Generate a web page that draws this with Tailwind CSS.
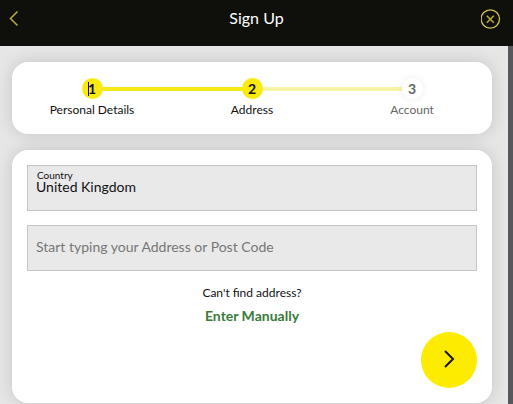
<!DOCTYPE html>
<html lang="en">
<head>
    <meta charset="UTF-8">
    <meta name="viewport" content="width=device-width, initial-scale=1.0">
    <title>Sign Up</title>
    <script src="https://cdn.jsdelivr.net/npm/@tailwindcss/browser@4"></script>
</head>
<body class="min-h-screen flex flex-col overflow-x-hidden bg-[#57585c] font-['Lato',sans-serif] text-[#111]">
    <!-- Header -->
    <header class="h-[46px] shrink-0 bg-[#0f100b] text-white flex justify-between items-start px-2 pt-2">
        <button type="button" aria-label="Back" class="w-6 h-6">
            <svg class="w-6 h-6" viewBox="0 0 24 24" fill="none" stroke="#b5a936" stroke-width="1.6">
                <path d="M9.5 3.5 L2.5 10.5 L9.5 17.5"/>
            </svg>
        </button>
        <h1 class="text-base leading-5">Sign Up</h1>
        <button type="button" aria-label="Close" class="w-6 h-6">
            <svg class="w-6 h-6" viewBox="0 0 24 24" fill="none" stroke="#cfc44a" stroke-width="1.3">
                <circle cx="9.3" cy="11" r="9.2"/>
                <path d="M5.8 7.8 L12.8 14.8 M12.8 7.8 L5.8 14.8" stroke="#b5a936" stroke-width="1.6"/>
            </svg>
        </button>
    </header>

    <main class="grow mr-[5px] bg-[#e6e6e6] pt-4 pl-3 pr-4">
        <!-- Progress steps -->
        <ol class="grid grid-cols-3 h-[72px] pt-4 mb-4 rounded-2xl bg-white shadow-[0_0_16px_rgba(0,0,0,0.15)] text-center text-xs">
            <li class="relative">
                <span class="absolute left-1/2 top-[9px] w-full h-1 bg-[#f6e918]"></span>
                <span class="relative mx-auto flex items-center justify-center w-[21px] h-[21px] rounded-full bg-[#fbea10] text-sm font-bold">
                    <span class="absolute left-[6px] top-1 w-px h-[14px] bg-[#111]"></span>1
                </span>
                <span class="block mt-[3px] leading-4">Personal Details</span>
            </li>
            <li class="relative">
                <span class="absolute left-1/2 top-[9px] w-full h-1 bg-[#f8f4a6]"></span>
                <span class="relative mx-auto flex items-center justify-center w-[21px] h-[21px] rounded-full bg-[#fbea10] text-sm font-bold">2</span>
                <span class="block mt-[3px] leading-4">Address</span>
            </li>
            <li class="relative text-[#666]">
                <span class="relative mx-auto flex items-center justify-center w-[21px] h-[21px] rounded-full bg-white shadow-[0_0_8px_rgba(0,0,0,0.08)] text-sm font-bold">3</span>
                <span class="block mt-[3px] leading-4">Account</span>
            </li>
        </ol>

        <!-- Address form -->
        <form class="rounded-2xl bg-white p-[15px] shadow-[0_0_16px_rgba(0,0,0,0.15)]">
            <div class="relative mb-[14px]">
                <label for="country" class="absolute left-[10px] top-1 text-[10px] leading-3">Country</label>
                <select id="country" class="block appearance-none w-full h-[46px] px-2 pt-[11px] pb-[13px] bg-[#e9e9e9] border border-[#c4c4c4] rounded-none text-sm leading-5">
                    <option>United Kingdom</option>
                </select>
            </div>
            <label for="address" class="sr-only">Address or Post Code</label>
            <input id="address" type="text" placeholder="Start typing your Address or Post Code" class="block w-full h-[46px] px-2 pb-[3px] bg-[#e9e9e9] border border-[#c4c4c4] text-sm leading-6 placeholder:text-[#777]">
            <div class="mt-[14px] text-center">
                <p class="text-xs leading-4">Can't find address?</p>
                <a href="#" class="inline-block mt-[5px] text-sm leading-5 font-bold text-[#397a3b]">Enter Manually</a>
            </div>
            <div class="flex justify-end mt-[5px]">
                <button type="submit" aria-label="Next" class="flex items-center justify-center w-14 h-14 rounded-full bg-[#fdeb00]">
                    <svg class="w-6 h-6" viewBox="0 0 24 24" fill="none" stroke="#15150a" stroke-width="2">
                        <path d="M8 3 L16 11 L8 19"/>
                    </svg>
                </button>
            </div>
        </form>
    </main>
</body>
</html>
